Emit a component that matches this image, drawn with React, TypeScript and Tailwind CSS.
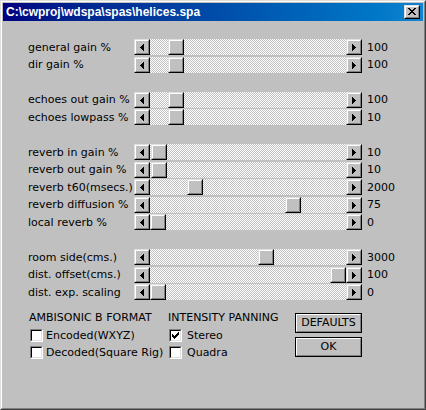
import React from "react";

type RaisedProps = {
  className?: string;
  style?: React.CSSProperties;
  children?: React.ReactNode;
};

function Raised({ className = "", style, children }: RaisedProps) {
  return (
    <div
      style={style}
      className={`border border-t-[#dfdfdf] border-l-[#dfdfdf] border-r-black border-b-black ${className}`}
    >
      <div className="w-full h-full border border-t-white border-l-white border-r-[#808080] border-b-[#808080] bg-[#c0c0c0] flex items-center justify-center">
        {children}
      </div>
    </div>
  );
}

function LeftArrow() {
  return (
    <svg width="4" height="8" viewBox="0 0 4 8" shapeRendering="crispEdges" className="block">
      <path d="M3 1h1v7h-1zM2 2h1v5h-1zM1 3h1v3h-1zM0 4h1v1h-1z" fill="#000" />
    </svg>
  );
}

function RightArrow() {
  return (
    <svg width="4" height="8" viewBox="0 0 4 8" shapeRendering="crispEdges" className="block">
      <path d="M0 1h1v7h-1zM1 2h1v5h-1zM2 3h1v3h-1zM3 4h1v1h-1z" fill="#000" />
    </svg>
  );
}

function CloseX() {
  return (
    <svg width="8" height="8" viewBox="0 0 8 8" shapeRendering="crispEdges" className="block">
      <path
        d="M0 0h2v1h-2zM6 0h2v1h-2zM1 1h2v1h-2zM5 1h2v1h-2zM2 2h4v1h-4zM3 3h2v1h-2zM2 4h4v1h-4zM1 5h2v1h-2zM5 5h2v1h-2zM0 6h2v1h-2zM6 6h2v1h-2z"
        fill="#000"
      />
    </svg>
  );
}

function ScrollBar({ pos }: { pos: number }) {
  return (
    <div className="flex w-[228px] h-4 shrink-0">
      <Raised className="w-4 h-4 shrink-0">
        <LeftArrow />
      </Raised>
      <div className="relative flex-1 h-4 bg-[repeating-conic-gradient(#c0c0c0_0_25%,#ffffff_0_50%)] bg-[length:2px_2px]">
        <Raised className="absolute top-0 w-4 h-4" style={{ left: pos }} />
      </div>
      <Raised className="w-4 h-4 shrink-0">
        <RightArrow />
      </Raised>
    </div>
  );
}

function CheckBox({ checked }: { checked?: boolean }) {
  return (
    <div className="w-[13px] h-[13px] shrink-0 border border-t-[#808080] border-l-[#808080] border-r-white border-b-white">
      <div className="w-full h-full border border-t-black border-l-black border-r-[#dfdfdf] border-b-[#dfdfdf] bg-white flex items-center justify-center">
        {checked && (
          <svg width="7" height="7" viewBox="0 0 7 7" shapeRendering="crispEdges" className="block">
            <path
              d="M6 0h1v1h-1zM5 1h2v1h-2zM0 2h1v1h-1zM4 2h3v1h-3zM0 3h2v1h-2zM3 3h3v1h-3zM0 4h5v1h-5zM1 5h3v1h-3zM2 6h1v1h-1z"
              fill="#000"
            />
          </svg>
        )}
      </div>
    </div>
  );
}

function PushButton({ label }: { label: string }) {
  return (
    <div className="w-[67px] h-5 border border-black">
      <div className="w-full h-full border border-t-white border-l-white border-r-[#808080] border-b-[#808080] bg-[#c0c0c0] flex items-center justify-center leading-4">
        {label}
      </div>
    </div>
  );
}

type Row = [string, number, string] | null;

const rows: Row[] = [
  ["general gain %", 18, "100"],
  ["dir gain %", 18, "100"],
  null,
  ["echoes out gain %", 18, "100"],
  ["echoes lowpass %", 18, "10"],
  null,
  ["reverb in gain %", 1, "10"],
  ["reverb out gain %", 1, "10"],
  ["reverb t60(msecs.)", 37, "2000"],
  ["reverb diffusion %", 135, "75"],
  ["local reverb %", 0, "0"],
  null,
  ["room side(cms.)", 108, "3000"],
  ["dist. offset(cms.)", 180, "100"],
  ["dist. exp. scaling", 0, "0"],
];

export default function App() {
  return (
    <div className="w-[426px] h-[410px] border border-t-[#dfdfdf] border-l-[#dfdfdf] border-r-[#404040] border-b-[#404040] bg-[#c0c0c0]">
      <div className="w-full h-full border border-t-white border-l-white border-r-[#808080] border-b-[#808080] p-px flex flex-col">
        <div className="h-[18px] shrink-0 flex items-center bg-linear-to-r from-[#000080] to-[#1084d0] pl-[3px] pr-[3px]">
          <span className="flex-1 text-white font-bold text-[12px] leading-[18px] font-['Liberation_Sans',Arial,sans-serif] whitespace-nowrap">
            {"C:\\cwproj\\wdspa\\spas\\helices.spa"}
          </span>
          <Raised className="w-4 h-[14px] shrink-0">
            <CloseX />
          </Raised>
        </div>
        <div className="flex-1 pl-[25px] pt-[18px] text-[11px] leading-4 font-['DejaVu_Sans',sans-serif] text-black">
          <div className="flex flex-col gap-[1.5px]">
            {rows.map((r, i) =>
              r === null ? (
                <div key={i} className="h-4" />
              ) : (
                <div key={i} className="flex items-center h-4">
                  <div className="w-[106px] shrink-0 whitespace-nowrap leading-4 pt-px">{r[0]}</div>
                  <ScrollBar pos={r[1]} />
                  <div className="ml-[5px] whitespace-nowrap leading-4 pt-px">{r[2]}</div>
                </div>
              )
            )}
          </div>
          <div className="flex mt-[10px]">
            <div className="w-[140px] shrink-0 flex flex-col">
              <div className="h-4 pl-px whitespace-nowrap">AMBISONIC B FORMAT</div>
              <div className="mt-px h-[17px] flex items-center pl-[2px] whitespace-nowrap">
                <CheckBox />
                <span className="ml-[3px]">Encoded(WXYZ)</span>
              </div>
              <div className="h-[17px] flex items-center pl-[2px] whitespace-nowrap">
                <CheckBox />
                <span className="ml-[3px]">Decoded(Square Rig)</span>
              </div>
            </div>
            <div className="w-[127px] shrink-0 flex flex-col">
              <div className="h-4 whitespace-nowrap">INTENSITY PANNING</div>
              <div className="mt-px h-[17px] flex items-center pl-px whitespace-nowrap">
                <CheckBox checked />
                <span className="ml-[5px]">Stereo</span>
              </div>
              <div className="h-[17px] flex items-center pl-px whitespace-nowrap">
                <CheckBox />
                <span className="ml-[5px]">Quadra</span>
              </div>
            </div>
            <div className="pt-[3px] flex flex-col gap-1">
              <PushButton label="DEFAULTS" />
              <PushButton label="OK" />
            </div>
          </div>
        </div>
      </div>
    </div>
  );
}
